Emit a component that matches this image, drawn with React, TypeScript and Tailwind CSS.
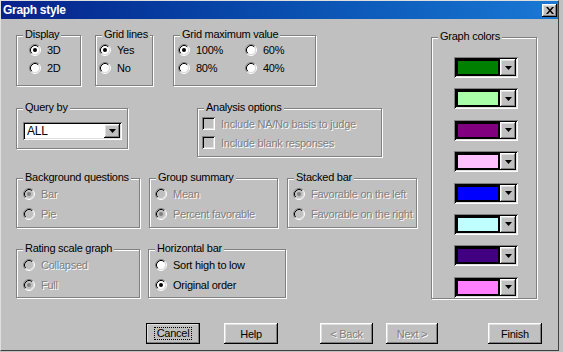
import React from "react";

const raised =
  "bg-[#c0c0c0] shadow-[inset_-1px_-1px_#000,inset_1px_1px_#fff,inset_-2px_-2px_#808080,inset_2px_2px_#dfdfdf]";
const sunken =
  "shadow-[inset_1px_1px_#808080,inset_-1px_-1px_#fff,inset_2px_2px_#000,inset_-2px_-2px_#dfdfdf]";
const dim = "text-[#808080] [text-shadow:1px_1px_0_#fff]";

function Group({ label, className, children }: { label: string; className: string; children?: React.ReactNode }) {
  return (
    <div className={`relative shrink-0 border border-[#808080] shadow-[inset_1px_1px_0_#fff,1px_1px_0_#fff] ${className}`}>
      <span className="absolute left-[6px] top-[-9px] bg-[#c0c0c0] px-[2px] leading-[14px] whitespace-nowrap">{label}</span>
      {children}
    </div>
  );
}

function Radio({ label, checked, disabled, h }: { label: string; checked?: boolean; disabled?: boolean; h: string }) {
  return (
    <div className={`flex items-center gap-[6px] ${h}`}>
      <svg width="12" height="12" viewBox="0 0 12 12" className="shrink-0">
        <circle cx="6" cy="6" r="4.2" fill={disabled ? "#c0c0c0" : "#fff"} />
        <path d="M2.11 9.89A5.5 5.5 0 0 1 9.89 2.11" stroke="#808080" fill="none" />
        <path d="M9.89 2.11A5.5 5.5 0 0 1 2.11 9.89" stroke="#fff" fill="none" />
        <path d="M2.82 9.18A4.5 4.5 0 0 1 9.18 2.82" stroke="#000" fill="none" />
        <path d="M9.18 2.82A4.5 4.5 0 0 1 2.82 9.18" stroke="#dfdfdf" fill="none" />
        {checked && <circle cx="6" cy="6" r="2" fill={disabled ? "#808080" : "#000"} />}
      </svg>
      <span className={`whitespace-nowrap ${disabled ? dim : ""}`}>{label}</span>
    </div>
  );
}

function Check({ label }: { label: string }) {
  return (
    <div className="flex items-center gap-[6px] h-[19px]">
      <span className={`w-[13px] h-[13px] shrink-0 bg-[#c0c0c0] ${sunken}`} />
      <span className={`whitespace-nowrap ${dim}`}>{label}</span>
    </div>
  );
}

function Arrow() {
  return (
    <svg width="7" height="4" viewBox="0 0 7 4">
      <path d="M0 0h7L3.5 4z" fill="#000" />
    </svg>
  );
}

function Swatch({ color }: { color: string }) {
  return (
    <div className={`flex w-[64px] h-[21px] p-[2px] ${sunken}`}>
      <div className="flex-1 border-2 border-black" style={{ backgroundColor: color }} />
      <div className={`w-[16px] flex items-center justify-center ${raised}`}>
        <Arrow />
      </div>
    </div>
  );
}

function Btn({ label, className, disabled, isDefault }: { label: string; className: string; disabled?: boolean; isDefault?: boolean }) {
  return (
    <div
      className={`h-[21px] flex items-center justify-center ${raised} ${isDefault ? "outline outline-1 outline-black -outline-offset-1 p-[4px]" : ""} ${className}`}
    >
      {isDefault ? (
        <span className="border border-dotted border-black px-[2px] leading-[11px] h-[13px] flex items-center">{label}</span>
      ) : (
        <span className={disabled ? dim : ""}>{label}</span>
      )}
    </div>
  );
}

const colors = ["#008000", "#a8ffa8", "#800080", "#ffc0ff", "#0000ff", "#c0ffff", "#400080", "#ff80ff"];

export default function App() {
  return (
    <div className="w-[563px] h-[352px] bg-[#c0c0c0] font-['Liberation_Sans',Arial,sans-serif] text-[11px] leading-[14px] tracking-[-0.25px] text-black">
      <div className="w-[559px] h-[351px] border border-t-[#dfdfdf] border-l-[#dfdfdf] border-r-[#404040] border-b-[#404040] flex flex-col">
        <div className="h-[18px] flex items-center justify-between bg-gradient-to-r from-[#08218a] to-[#1a78d4] pl-[2px] pr-[1px]">
          <span className="text-white font-bold text-[12px] tracking-[-0.3px]">Graph style</span>
          <div className={`w-[15px] h-[13px] flex items-center justify-center ${raised}`}>
            <svg width="8" height="7" viewBox="0 0 8 7">
              <path d="M0 0h2l2 2.5L6 0h2L5 3.5 8 7H6L4 4.5 2 7H0l3-3.5z" fill="#000" />
            </svg>
          </div>
        </div>

        <div className="flex flex-col pl-[15px]">
          <div className="flex items-start">
            <div className="flex flex-col w-[401px]">
              <div className="flex mt-[16px] h-[51px]">
                <Group label="Display" className="w-[65px] h-[51px] pt-[5px] pl-[12px]">
                  <Radio label="3D" checked h="h-[18px]" />
                  <Radio label="2D" h="h-[18px]" />
                </Group>
                <Group label="Grid lines" className="ml-[14px] w-[58px] h-[51px] pt-[5px] pl-[3px]">
                  <Radio label="Yes" checked h="h-[18px]" />
                  <Radio label="No" h="h-[18px]" />
                </Group>
                <Group label="Grid maximum value" className="ml-[20px] w-[143px] h-[51px] pt-[5px] pl-[4px] grid grid-cols-[67px_1fr] content-start">
                  <Radio label="100%" checked h="h-[18px]" />
                  <Radio label="60%" h="h-[18px]" />
                  <Radio label="80%" h="h-[18px]" />
                  <Radio label="40%" h="h-[18px]" />
                </Group>
              </div>

              <div className="flex items-start mt-[22px]">
                <Group label="Query by" className="w-[112px] h-[41px] pt-[13px] pl-[6px]">
                  <div className={`w-[99px] h-[18px] bg-white flex p-[2px] ${sunken}`}>
                    <span className="flex-1 pl-[2px] leading-[14px] text-[12px]">ALL</span>
                    <div className={`w-[16px] flex items-center justify-center ${raised}`}>
                      <Arrow />
                    </div>
                  </div>
                </Group>
                <Group label="Analysis options" className="ml-[69px] w-[185px] h-[49px] pt-[5px] pl-[4px]">
                  <Check label="Include NA/No basis to judge" />
                  <Check label="Include blank responses" />
                </Group>
              </div>

              <div className="flex mt-[21px]">
                <Group label="Background questions" className="w-[124px] h-[50px] pt-[5px] pl-[6px]">
                  <Radio label="Bar" checked disabled h="h-[20px]" />
                  <Radio label="Pie" disabled h="h-[20px]" />
                </Group>
                <Group label="Group summary" className="ml-[9px] w-[129px] h-[50px] pt-[5px] pl-[5px]">
                  <Radio label="Mean" disabled h="h-[20px]" />
                  <Radio label="Percent favorable" checked disabled h="h-[20px]" />
                </Group>
                <Group label="Stacked bar" className="ml-[9px] w-[130px] h-[50px] pt-[5px] pl-[5px]">
                  <Radio label="Favorable on the left" checked disabled h="h-[20px]" />
                  <Radio label="Favorable on the right" disabled h="h-[20px]" />
                </Group>
              </div>

              <div className="flex mt-[21px]">
                <Group label="Rating scale graph" className="w-[124px] h-[49px] pt-[5px] pl-[6px]">
                  <Radio label="Collapsed" disabled h="h-[20px]" />
                  <Radio label="Full" checked disabled h="h-[20px]" />
                </Group>
                <Group label="Horizontal bar" className="ml-[8px] w-[138px] h-[49px] pt-[5px] pl-[6px]">
                  <Radio label="Sort high to low" h="h-[20px]" />
                  <Radio label="Original order" checked h="h-[20px]" />
                </Group>
              </div>
            </div>

            <Group label="Graph colors" className="ml-[14px] mt-[18px] w-[106px] h-[262px] pt-[19px] pl-[22px] flex flex-col gap-[10.4px]">
              {colors.map((c) => (
                <Swatch key={c} color={c} />
              ))}
            </Group>
          </div>

          <div className="flex mt-[24px] pl-[130px]">
            <Btn label="Cancel" isDefault className="w-[54px]" />
            <Btn label="Help" className="ml-[24px] w-[54px]" />
            <Btn label="< Back" disabled className="ml-[42px] w-[53px]" />
            <Btn label="Next >" disabled className="ml-[13px] w-[52px]" />
            <Btn label="Finish" className="ml-[50px] w-[54px]" />
          </div>
        </div>
      </div>
    </div>
  );
}
